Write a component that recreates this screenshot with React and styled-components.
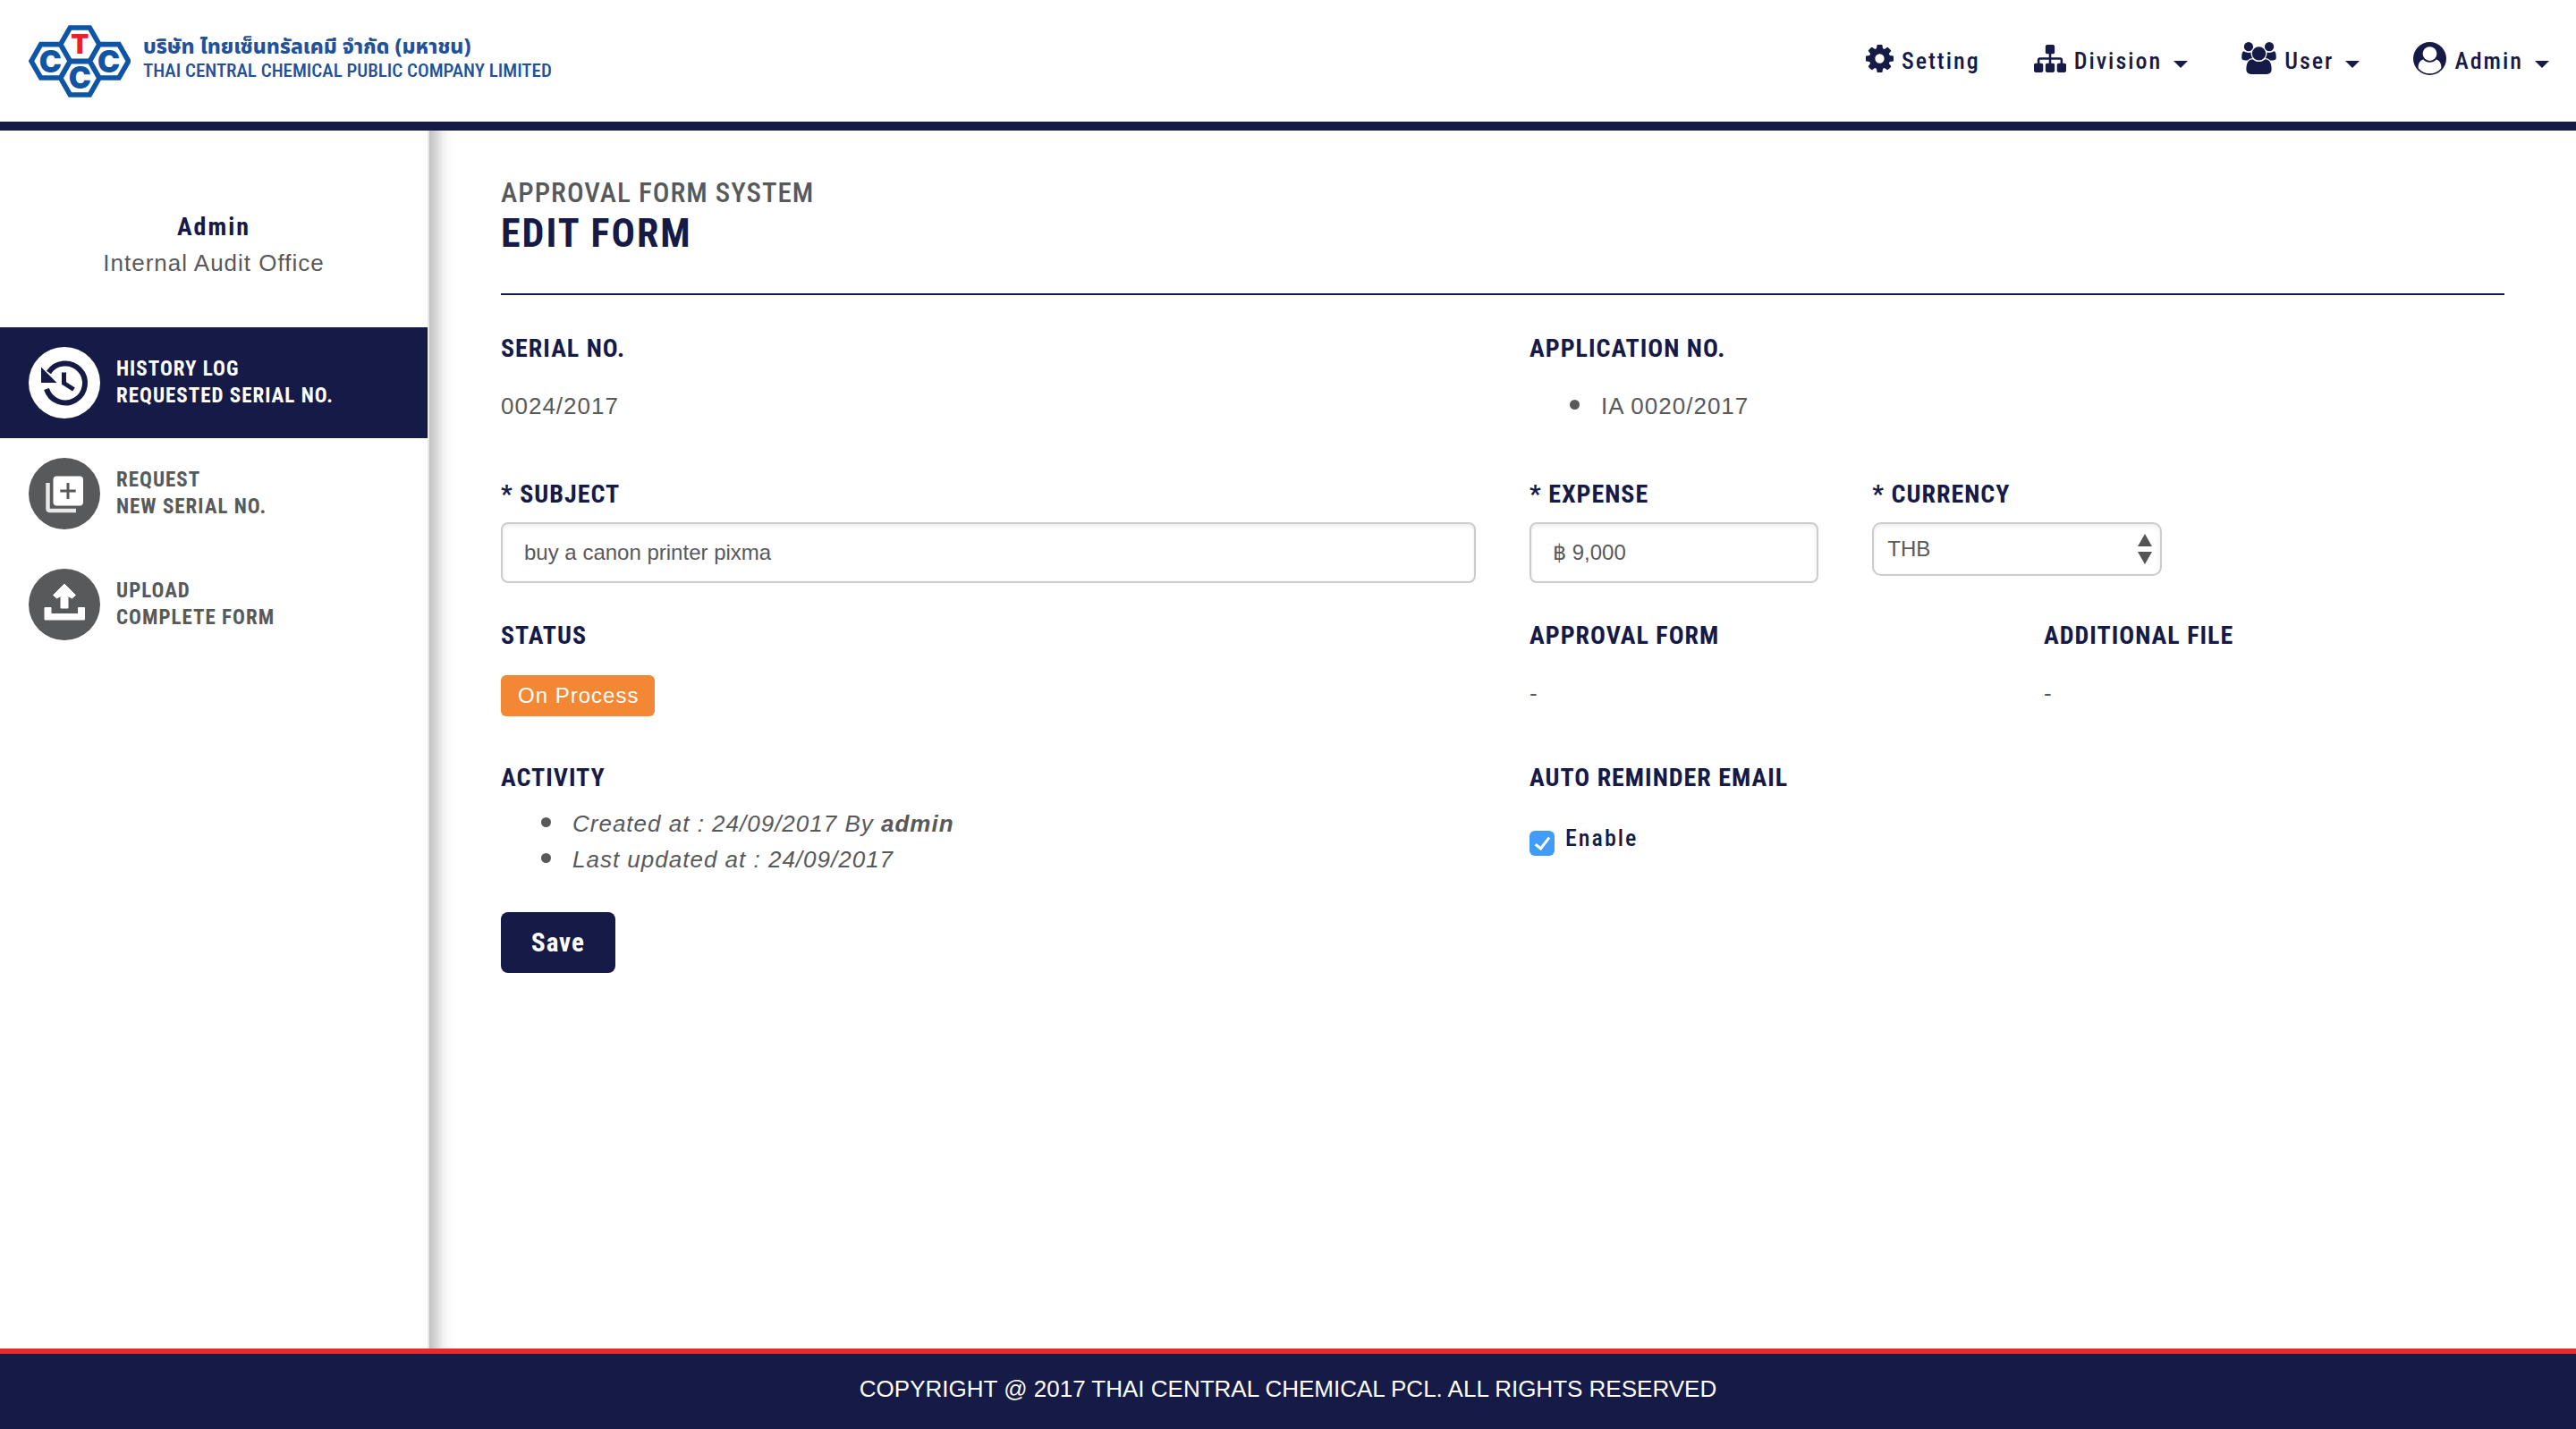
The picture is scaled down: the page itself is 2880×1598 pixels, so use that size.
import React from 'react';
import styled, { createGlobalStyle } from 'styled-components';

const navy = '#151a46';
const grey = '#58595b';
const condensed = '"Roboto Condensed", Roboto, sans-serif';
const body = '"Liberation Sans", Arial, sans-serif';

const GlobalStyle = createGlobalStyle`
  *, *::before, *::after { box-sizing: border-box; }
  body { margin: 0; background: #fff; color: ${grey}; font: 26px/40px ${body}; }
  h1, h2, p, ul { margin: 0; padding: 0; }
  button, input, select { font: inherit; color: inherit; }
`;

const Page = styled.div`
  min-height: 100vh;
  display: flex;
  flex-direction: column;
`;

const Header = styled.header`
  min-height: 146px;
  border-bottom: 10px solid ${navy};
  padding: 0 30px 0 32px;
  display: flex;
  align-items: center;
  justify-content: space-between;
`;

const Brand = styled.a`
  display: flex;
  align-items: center;
  gap: 14px;
  color: #21519b;
  text-decoration: none;
`;

const BrandNames = styled.span`
  display: flex;
  flex-direction: column;
  padding-bottom: 4px;
  white-space: nowrap;
`;

const ThaiName = styled.span`
  font: 800 23px/26px "Noto Sans Thai", "Noto Sans", sans-serif;
`;

const EnglishName = styled.span`
  font: 500 21px/26px ${condensed};
`;

const Nav = styled.nav`
  display: flex;
  align-items: center;
  gap: 60px;
`;

const NavItem = styled.button`
  display: flex;
  align-items: center;
  gap: 9px;
  padding: 0;
  border: 0;
  background: none;
  color: ${navy};
  text-decoration: none;
  font: 500 26px/40px ${condensed};
  letter-spacing: 2px;
  cursor: pointer;
`;

const NavIcon = styled.svg`
  display: block;
  margin-bottom: 6px;
  fill: currentColor;
`;

const Caret = styled.span`
  margin: 8px 0 0 4px;
  border: 8px solid transparent;
  border-top-color: currentColor;
  border-bottom: 0;
`;

const Columns = styled.div`
  flex: 1;
  display: flex;
`;

const Sidebar = styled.aside`
  flex: 0 0 480px;
  border-right: 2px solid #e8e8e8;
`;

const Profile = styled.div`
  padding: 88px 20px 52px;
  text-align: center;
  letter-spacing: 1px;
`;

const ProfileName = styled.p`
  color: ${navy};
  font: 700 28px/40px ${condensed};
  letter-spacing: 2px;
`;

const SideLink = styled.a`
  display: flex;
  align-items: center;
  gap: 18px;
  height: 124px;
  padding-left: 32px;
  background: ${(p) => (p.$active ? navy : 'transparent')};
  color: ${(p) => (p.$active ? '#fff' : grey)};
  font: 700 23px/30px ${condensed};
  letter-spacing: 1px;
  text-decoration: none;
  text-transform: uppercase;
`;

const Main = styled.main`
  flex: 1;
  min-width: 0;
  padding: 50px 80px 60px;
  background: linear-gradient(to right, #c2c2c2, #d8d8d8 8px, #f0f0f0 15px, #fafafa 21px, #fff 30px) no-repeat;
`;

const TitleBlock = styled.div`
  padding-bottom: 42px;
  margin-bottom: 40px;
  border-bottom: 2px solid ${navy};
`;

const System = styled.p`
  font: 500 31px/40px ${condensed};
  letter-spacing: 1px;
`;

const Title = styled.h1`
  color: ${navy};
  font: 700 44px/50px ${condensed};
  letter-spacing: 2px;
`;

const Row = styled.div`
  display: grid;
  grid-template-columns: repeat(12, minmax(0, 1fr));
  column-gap: 60px;
  margin-bottom: ${(p) => p.$after}px;
`;

const Field = styled.div`
  grid-column: span ${(p) => p.$span};
  display: flex;
  flex-direction: column;
  align-items: flex-start;
  gap: ${(p) => (p.$tight ? 11 : 24)}px;
`;

const Label = styled.label`
  color: ${navy};
  font: 700 28px/40px ${condensed};
  letter-spacing: 1px;
  text-transform: uppercase;
`;

const Value = styled.p`
  letter-spacing: 1px;
`;

const List = styled.ul`
  padding-left: 80px;
  letter-spacing: 1px;
  font-style: ${(p) => (p.$italic ? 'italic' : 'normal')};
`;

const Item = styled.li`
  list-style: none;
  display: flex;
  align-items: center;

  &::before {
    content: '';
    width: 11px;
    height: 11px;
    margin: 0 24px 4px -35px;
    border-radius: 50%;
    background: ${grey};
  }
`;

const TextBox = styled.input`
  width: 100%;
  height: 68px;
  padding: 0 24px;
  border: 2px solid #ccc;
  border-radius: 8px;
  background: #fff;
  box-shadow: inset 0 2px 4px rgba(0, 0, 0, 0.08);
  font-size: 24px;
`;

const SelectWrap = styled.div`
  position: relative;
  width: 100%;
`;

const Select = styled.select`
  display: block;
  appearance: none;
  width: 100%;
  height: 60px;
  padding: 0 40px 0 15px;
  border: 2px solid #ccc;
  border-radius: 10px;
  background: #fff;
  box-shadow: inset 0 2px 4px rgba(0, 0, 0, 0.08);
  font-size: 24px;
`;

const Arrows = styled.svg`
  position: absolute;
  right: 11px;
  top: 13px;
  fill: #555;
  pointer-events: none;
`;

const Badge = styled.span`
  padding: 0 18px 0 19px;
  border-radius: 6px;
  background: #f48734;
  color: #fff;
  font-size: 24px;
  line-height: 46px;
  letter-spacing: 1px;
`;

const CheckLabel = styled.label`
  display: flex;
  align-items: flex-end;
  gap: 12px;
  padding-top: 3px;
  color: ${navy};
  font: 500 26px/40px ${condensed};
  letter-spacing: 2px;
`;

const Checkbox = styled.input`
  appearance: none;
  width: 28px;
  height: 28px;
  margin: 0;
  border-radius: 6px;
  background: #419bf9;
  display: grid;
  place-items: center;

  &:checked::after {
    content: '';
    width: 9px;
    height: 17px;
    margin-bottom: 4px;
    border: solid #fff;
    border-width: 0 3px 3px 0;
    transform: rotate(38deg);
  }
`;

const Save = styled.button`
  height: 68px;
  padding: 0 34px;
  border: 0;
  border-radius: 8px;
  background: ${navy};
  color: #fff;
  font: 700 29px/40px ${condensed};
  letter-spacing: 1px;
`;

const Footer = styled.footer`
  border-top: 6px solid #e82a2c;
  padding: 19px 30px 25px;
  background: ${navy};
  color: #fff;
  text-align: center;
`;

const hexagon = (x, y) =>
  `M${x - 65} ${y}L${x - 33} ${y - 56}H${x + 33}L${x + 65} ${y}L${x + 33} ${y + 56}H${x - 33}Z`;

function Logo() {
  return (
    <svg width="114" height="81" viewBox="37 52 342 243" aria-hidden="true">
      <path
        d={hexagon(209, 117) + hexagon(111, 173) + hexagon(307, 173) + hexagon(209, 230)}
        fill="#fff"
        stroke="#0f55a5"
        strokeWidth="17"
      />
      <g fontFamily="Inter, sans-serif" fontWeight="900" textAnchor="middle" fill="#0f55a5">
        <text x="209" y="147" fontSize="88" fill="#ed1c2e">T</text>
        <text x="110" y="210" fontSize="101">C</text>
        <text x="306" y="210" fontSize="101">C</text>
        <text x="209" y="266" fontSize="101">C</text>
      </g>
    </svg>
  );
}

const GearIcon = () => (
  <NavIcon width="31" height="31" viewBox="128 128 1536 1536" aria-hidden="true">
    <path d="M1152 896q0-106-75-181t-181-75-181 75-75 181 75 181 181 75 181-75 75-181zm512-109v222q0 12-8 23t-20 13l-185 28q-19 54-39 91 35 50 107 138 10 12 10 25t-9 23q-27 37-99 108t-94 71q-12 0-26-9l-138-108q-44 23-91 38-16 136-29 186-7 28-36 28h-222q-14 0-24.500-8.500t-11.500-21.500l-28-184q-49-16-90-37l-141 107q-10 9-25 9-14 0-25-11-126-114-165-168-7-10-7-23 0-12 8-23 15-21 51-66.500t54-70.500q-27-50-41-99l-183-27q-13-2-21-12.500t-8-23.500v-222q0-12 8-23t19-13l186-28q14-46 39-92-40-57-107-138-10-12-10-24 0-10 9-23 26-36 98.500-107.500t94.500-71.500q13 0 26 10l138 107q44-23 91-38 16-136 29-186 7-28 36-28h222q14 0 24.500 8.500t11.500 21.500l28 184q49 16 90 37l142-107q9-9 24-9 13 0 25 10 129 119 165 170 7 8 7 22 0 12-8 23-15 21-51 66.500t-54 70.500q26 50 41 98l183 28q13 2 21 12.500t8 23.500z" />
  </NavIcon>
);

const SitemapIcon = () => (
  <NavIcon width="36" height="31" viewBox="0 128 1792 1536" aria-hidden="true">
    <path d="M1792 1248v320q0 40-28 68t-68 28h-320q-40 0-68-28t-28-68v-320q0-40 28-68t68-28h96v-192h-512v192h96q40 0 68 28t28 68v320q0 40-28 68t-68 28h-320q-40 0-68-28t-28-68v-320q0-40 28-68t68-28h96v-192h-512v192h96q40 0 68 28t28 68v320q0 40-28 68t-68 28h-320q-40 0-68-28t-28-68v-320q0-40 28-68t68-28h96v-192q0-52 38-90t90-38h512v-192h-96q-40 0-68-28t-28-68v-320q0-40 28-68t68-28h320q40 0 68 28t28 68v320q0 40-28 68t-68 28h-96v192h512q52 0 90 38t38 90v192h96q40 0 68 28t28 68z" />
  </NavIcon>
);

const UsersIcon = () => (
  <NavIcon width="39" height="36" viewBox="0 0 1920 1792" aria-hidden="true">
    <path d="M593 896q-162 5-265 128h-134q-82 0-138-40.500t-56-118.500q0-353 124-353 6 0 43.500 21t97.500 42.500 119 21.500q67 0 133-23-5 37-5 66 0 139 81 256zM1664 1533q0 120-73 189.500t-194 69.500h-874q-121 0-194-69.500t-73-189.500q0-53 3.500-103.500t14-109 26.500-108.500 43-97.500 62-81 85.500-53.500 111.500-20q10 0 43 21.500t73 48 107 48 135 21.500 135-21.500 107-48 73-48 43-21.500q61 0 111.500 20t85.500 53.500 62 81 43 97.500 26.500 108.500 14 109 3.500 103.500zM640 256q0 106-75 181t-181 75-181-75-75-181 75-181 181-75 181 75 75 181zM1344 640q0 159-112.500 271.500t-271.500 112.500-271.500-112.500-112.500-271.500 112.500-271.500 271.500-112.500 271.500 112.500 112.500 271.500zM1920 865q0 78-56 118.500t-138 40.500h-134q-103-123-265-128 81-117 81-256 0-29-5-66 66 23 133 23 59 0 119-21.500t97.500-42.500 43.500-21q124 0 124 353zM1792 256q0 106-75 181t-181 75-181-75-75-181 75-181 181-75 181 75 75 181z" />
  </NavIcon>
);

const UserCircleIcon = () => (
  <NavIcon width="37" height="37" viewBox="0 0 108 108" aria-hidden="true">
    <circle cx="54" cy="54" r="54" />
    <circle cx="54" cy="38" r="23" fill="#fff" />
    <path d="M33 57C19 61 15 76 17 86A49 49 0 0 0 91 86C93 76 89 61 75 57A28 28 0 0 1 33 57Z" fill="#fff" />
  </NavIcon>
);

const HistoryIcon = () => (
  <svg width="80" height="80" viewBox="0 0 80 80" aria-hidden="true">
    <circle cx="40" cy="40" r="40" fill="#fff" />
    <g fill="none" stroke={navy}>
      <path d="M22.500 28.500A22 22 0 1 1 20 47" strokeWidth="6" />
      <path d="M39.500 28.500V40.500L50.500 47.500" strokeWidth="5" />
    </g>
    <path d="M14 22.500V40H31.500Z" fill={navy} />
  </svg>
);

const AddIcon = () => (
  <svg width="80" height="80" viewBox="0 0 80 80" aria-hidden="true">
    <circle cx="40" cy="40" r="40" fill={grey} />
    <path d="M21.500 28V56.500Q21.500 59 24 59H53" fill="none" stroke="#e8e8e8" strokeWidth="4.500" />
    <rect x="27.500" y="20.500" width="33.500" height="33" rx="4" fill="#fff" />
    <path d="M44 28V46M35.300 37H52.700" stroke={grey} strokeWidth="3" />
  </svg>
);

const UploadIcon = () => (
  <svg width="80" height="80" viewBox="0 0 80 80" aria-hidden="true">
    <circle cx="40" cy="40" r="40" fill={grey} />
    <g fill="#fff" stroke="#fff" strokeWidth="1" strokeLinejoin="round">
      <path d="M40 17L52.500 29.500L48.500 33L44 30.500V44H36V30.500L31.500 33L27.500 29.500Z" />
      <path d="M18 43.500H25V50.500H55.500V43.500H62.500V57H18Z" />
    </g>
  </svg>
);

export default function App() {
  return (
    <Page>
      <GlobalStyle />
      <Header>
        <Brand href="#">
          <Logo />
          <BrandNames>
            <ThaiName lang="th">บริษัท ไทยเซ็นทรัลเคมี จำกัด (มหาชน)</ThaiName>
            <EnglishName>THAI CENTRAL CHEMICAL PUBLIC COMPANY LIMITED</EnglishName>
          </BrandNames>
        </Brand>
        <Nav>
          <NavItem as="a" href="#setting"><GearIcon />Setting</NavItem>
          <NavItem type="button"><SitemapIcon />Division<Caret /></NavItem>
          <NavItem type="button"><UsersIcon />User<Caret /></NavItem>
          <NavItem type="button"><UserCircleIcon />Admin<Caret /></NavItem>
        </Nav>
      </Header>
      <Columns>
        <Sidebar>
          <Profile>
            <ProfileName>Admin</ProfileName>
            <p>Internal Audit Office</p>
          </Profile>
          <nav>
            <SideLink href="#history" $active>
              <HistoryIcon />
              <span>History Log<br />Requested Serial No.</span>
            </SideLink>
            <SideLink href="#request">
              <AddIcon />
              <span>Request<br />New Serial No.</span>
            </SideLink>
            <SideLink href="#upload">
              <UploadIcon />
              <span>Upload<br />Complete Form</span>
            </SideLink>
          </nav>
        </Sidebar>
        <Main>
          <TitleBlock>
            <System>APPROVAL FORM SYSTEM</System>
            <Title>EDIT FORM</Title>
          </TitleBlock>
          <form onSubmit={(e) => e.preventDefault()}>
            <Row $after={59}>
              <Field $span={6}>
                <Label as="h2">Serial No.</Label>
                <Value>0024/2017</Value>
              </Field>
              <Field $span={6}>
                <Label as="h2">Application No.</Label>
                <List><Item>IA 0020/2017</Item></List>
              </Field>
            </Row>
            <Row $after={39}>
              <Field $span={6} $tight>
                <Label htmlFor="subject">* Subject</Label>
                <TextBox id="subject" defaultValue="buy a canon printer pixma" />
              </Field>
              <Field $span={2} $tight>
                <Label htmlFor="expense">* Expense</Label>
                <TextBox id="expense" defaultValue="฿ 9,000" />
              </Field>
              <Field $span={2} $tight>
                <Label htmlFor="currency">* Currency</Label>
                <SelectWrap>
                  <Select id="currency" defaultValue="THB">
                    <option>THB</option>
                  </Select>
                  <Arrows width="16" height="34" viewBox="0 0 16 34" aria-hidden="true">
                    <path d="M8 0L16 14H0ZM8 34L0 20H16Z" />
                  </Arrows>
                </SelectWrap>
              </Field>
            </Row>
            <Row $after={49}>
              <Field $span={6}>
                <Label as="h2">Status</Label>
                <Badge>On Process</Badge>
              </Field>
              <Field $span={3}>
                <Label as="h2">Approval Form</Label>
                <Value>-</Value>
              </Field>
              <Field $span={3}>
                <Label as="h2">Additional File</Label>
                <Value>-</Value>
              </Field>
            </Row>
            <Row $after={39}>
              <Field $span={6} $tight>
                <Label as="h2">Activity</Label>
                <List $italic>
                  <Item><span>Created at : 24/09/2017 By <b>admin</b></span></Item>
                  <Item>Last updated at : 24/09/2017</Item>
                </List>
              </Field>
              <Field $span={6}>
                <Label as="h2">Auto Reminder Email</Label>
                <CheckLabel>
                  <Checkbox type="checkbox" defaultChecked />
                  Enable
                </CheckLabel>
              </Field>
            </Row>
            <Save type="submit">Save</Save>
          </form>
        </Main>
      </Columns>
      <Footer>COPYRIGHT @ 2017 THAI CENTRAL CHEMICAL PCL. ALL RIGHTS RESERVED</Footer>
    </Page>
  );
}
